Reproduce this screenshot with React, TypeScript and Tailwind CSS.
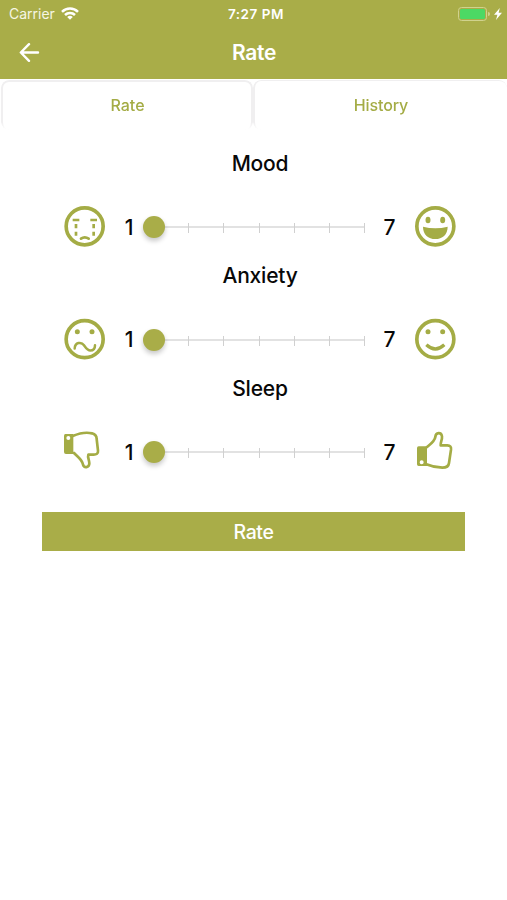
import type { ReactNode } from "react";

const iconClass = "block h-[60px] w-[60px] shrink-0 text-[#a4ac45]";

function Icon({ y, children }: { y: number; children: ReactNode }) {
  return (
    <svg className={iconClass} viewBox={`0 ${y} 180 180`} fill="none" stroke="currentColor" strokeLinecap="round" strokeLinejoin="round">
      {children}
    </svg>
  );
}

const CryingFace = () => (
  <Icon y={6}>
    <circle cx="89" cy="94" r="55.5" strokeWidth="11" />
    <path d="M53 75H73M106 75H126" strokeWidth="8" strokeLinecap="butt" />
    <path d="M63 87V100M63 110V122M116 87V100M116 110V122" strokeWidth="8" strokeLinecap="butt" />
    <path d="M78 131Q89 123 101 131" strokeWidth="8" />
  </Icon>
);

const GrinningFace = () => (
  <Icon y={6}>
    <circle cx="91" cy="94" r="55.5" strokeWidth="11" />
    <ellipse cx="69" cy="75" rx="7.5" ry="10" fill="currentColor" stroke="none" />
    <ellipse cx="113" cy="75" rx="7.5" ry="10" fill="currentColor" stroke="none" />
    <path d="M54 95Q91 105 128 95C128 119 112 132 91 132S54 119 54 95Z" fill="currentColor" stroke="none" />
  </Icon>
);

const UneasyFace = () => (
  <Icon y={-1.5}>
    <circle cx="89" cy="86" r="55.5" strokeWidth="11" />
    <circle cx="67" cy="64" r="7.5" fill="currentColor" stroke="none" />
    <circle cx="111" cy="64" r="7.5" fill="currentColor" stroke="none" />
    <path d="M59 114C60 95 79 93 87 104C94 114 97 120 106 120C116 120 120 113 120 104" strokeWidth="7.5" />
  </Icon>
);

const SmilingFace = () => (
  <Icon y={-1.5}>
    <circle cx="91" cy="86" r="55.5" strokeWidth="11" />
    <circle cx="69" cy="64" r="7.5" fill="currentColor" stroke="none" />
    <circle cx="113" cy="64" r="7.5" fill="currentColor" stroke="none" />
    <path d="M64 103Q91 128 118 103" strokeWidth="10" strokeLinecap="butt" />
  </Icon>
);

const ThumbDown = () => (
  <Icon y={6}>
    <path fillRule="evenodd" d="M31 42H55V102H33Q27 102 27 96V48Q27 42 31 42ZM40 48A6 6 0 1 0 40 60A6 6 0 1 0 40 48Z" fill="currentColor" stroke="none" />
    <path d="M53 48C72 40 95 36 111 40C121 43 125 49 125 57L129 92C130 101 124 104 116 104H100C97 111 103 120 103 130C103 144 87 145 84 134C82 119 68 111 57 99" strokeWidth="8" />
  </Icon>
);

const ThumbUp = () => (
  <Icon y={6}>
    <path fillRule="evenodd" d="M41 79H66V138H41Q36 138 36 133V84Q36 79 41 79ZM50 121A6 6 0 1 0 50 133A6 6 0 1 0 50 121Z" fill="currentColor" stroke="none" />
    <path d="M65 82C77 72 89 64 91 51C92 36 109 36 111 49C112 60 106 67 107 76H127C136 76 139 81 138 89L132 129C131 139 123 143 112 143C95 143 78 139 64 133" strokeWidth="8" />
  </Icon>
);

function Slider() {
  return (
    <div className="flex h-[60px] w-[222px] items-center">
      <div className="z-10 h-[22px] w-[22px] shrink-0 rounded-full bg-[#a9ad48] shadow-[0_3px_5px_rgba(0,0,0,0.22)]" />
      <div className="mt-[2px] -ml-[11px] grid h-[10px] w-[211px] grid-cols-6 bg-[linear-gradient(#e2e2e2,#e2e2e2)] bg-[length:100%_2px] bg-[position:0_3px] bg-no-repeat">
        {[2, 3, 4, 5, 6, 7].map((n) => (
          <span key={n} className="border-r border-[#d0d0d0]" />
        ))}
      </div>
    </div>
  );
}

function Question({ title, low, high }: { title: string; low: ReactNode; high: ReactNode }) {
  return (
    <section className="h-[112.5px]">
      <h2 className="h-[52.5px] pl-[13px] text-center text-[21px] leading-[38.5px] font-medium tracking-[-0.2px]">{title}</h2>
      <div className="flex h-[60px] items-center pl-[55px]">
        {low}
        <span className="w-[28px] pt-px text-center text-[21px] leading-[30px] font-medium">1</span>
        <Slider />
        <span className="ml-[9px] w-[31px] pt-px text-center text-[21px] leading-[30px] font-medium">7</span>
        {high}
      </div>
    </section>
  );
}

export default function App() {
  return (
    <main className="h-[900px] w-[507px] overflow-hidden bg-white font-['Inter','Liberation_Sans',sans-serif] text-[#080808]">
      <header className="h-[79px] bg-[#a9ad48] text-white">
        <div className="grid h-[27px] grid-cols-3 items-center">
          <div className="flex items-center gap-[6px] pl-[9px]">
            <span className="text-[14px] text-[#f6f6e4]">Carrier</span>
            <svg className="h-[13px] w-[18px]" viewBox="0 0 18 13" fill="none" stroke="white" strokeWidth="2.5">
              <path d="M1 4.8C5.5.3 12.5.3 17 4.8M4 8C6.8 5.2 11.2 5.2 14 8" />
              <path d="M6.2 9.9Q9 7.6 11.8 9.9L9 12.7Z" fill="white" stroke="none" />
            </svg>
          </div>
          <span className="pt-px pl-[5px] text-center text-[13.5px] font-semibold tracking-[0.55px]">7:27 PM</span>
          <div className="flex items-center justify-end gap-px pr-[5px]">
            <span className="h-[14px] w-[29px] rounded-[3.5px] border border-[#d0d28e] p-px">
              <span className="block h-full w-[24.5px] rounded-[1.5px] bg-[#4cd964]" />
            </span>
            <span className="h-[4px] w-[2px] rounded-r-full bg-[#d0d28e]" />
            <svg className="ml-[3px] h-[12px] w-[8px]" viewBox="0 0 8 12" fill="white">
              <path d="M5.8 0L0 6.8H3.4L2 12L8 4.8H4.6Z" />
            </svg>
          </div>
        </div>
        <div className="grid h-[52px] grid-cols-3 items-center">
          <svg className="ml-[19px] h-[20px] w-[21px]" viewBox="0 0 21 20" fill="none" stroke="white" strokeWidth="2.4" strokeLinecap="round" strokeLinejoin="round">
            <path d="M19 9.5H2M10 1.2L1.8 9.5L10 17.8" />
          </svg>
          <h1 className="pl-px text-center text-[21px] leading-[50px] font-semibold tracking-[-0.3px]">Rate</h1>
        </div>
      </header>
      <nav className="flex h-[51px] bg-white text-[16px] font-medium text-[#a4ac45]">
        <button className="mt-[1px] ml-px h-[50px] w-[252px] rounded-[8px] border-2 border-b-0 border-[#f0eff0] pl-px [mask-image:linear-gradient(black_85%,transparent)]">
          <span className="block pb-[2px] leading-[44px]">Rate</span>
        </button>
        <button className="mt-[1px] h-[50px] w-[254px] rounded-[8px] border-t border-l-2 border-[#f0eff0] [mask-image:linear-gradient(black_85%,transparent)]">
          <span className="block pb-[2px] leading-[44px] tracking-[-0.1px]">History</span>
        </button>
      </nav>
      <div className="pt-[14.5px]">
        <Question title="Mood" low={<CryingFace />} high={<GrinningFace />} />
        <Question title="Anxiety" low={<UneasyFace />} high={<SmilingFace />} />
        <Question title="Sleep" low={<ThumbDown />} high={<ThumbUp />} />
      </div>
      <button className="mt-[30px] ml-[42px] block h-[38.5px] w-[423px] bg-[#a9ad48] text-center text-[19.5px] leading-[40px] font-medium tracking-[-0.4px] text-white">
        Rate
      </button>
    </main>
  );
}
